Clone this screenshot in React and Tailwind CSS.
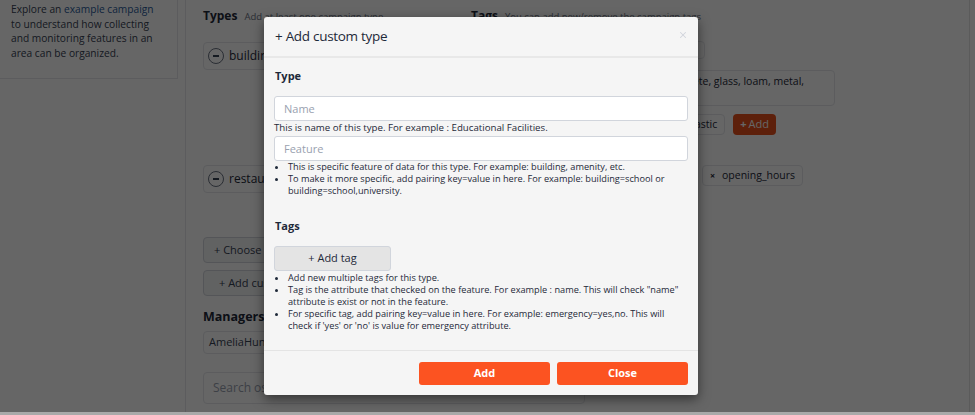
import { X } from "lucide-react";

const font = { fontFamily: '"Open Sans", "Liberation Sans", sans-serif' };

function TypeCard({ label }) {
  return (
    <div className="flex items-center gap-[5px] h-[28px] w-[260px] border border-gray-200 rounded px-[4px]">
      <span className="w-[16px] h-[16px] rounded-full border border-gray-500 flex items-center justify-center">
        <span className="w-[6px] h-[2px] bg-gray-700" />
      </span>
      <span className="text-[12px] text-gray-800">{label}</span>
    </div>
  );
}

function Chip({ children }) {
  return (
    <span className="inline-flex items-center gap-[7px] h-[21px] px-[7px] border border-gray-200 rounded text-[10.5px] text-gray-800 whitespace-nowrap shrink-0">
      <span className="text-[9px] font-bold">×</span>
      {children}
    </span>
  );
}

function Background() {
  return (
    <div className="flex h-[412px] bg-white" style={font}>
      {/* sidebar */}
      <div className="w-[186px] border-r border-gray-200 shrink-0">
        <div className="w-[178px] h-[79px] border-r border-b border-gray-200 px-[11px] pt-[2px] text-[10.2px] leading-[14.5px] text-gray-700">
          Explore an <span className="text-[#2a5a9a]">example campaign</span>
          <br />
          to understand how collecting
          <br />
          and monitoring features in an
          <br />
          area can be organized.
        </div>
      </div>

      {/* main */}
      <div className="flex-1 pl-[17px] pt-[7px] flex gap-[8px]">
        <div className="w-[260px] flex flex-col">
          <div className="flex items-baseline gap-[7px] h-[18px]">
            <span className="text-[12px] font-bold text-gray-800">Types</span>
            <span className="text-[9.5px] text-gray-500 whitespace-nowrap">Add at least one campaign type</span>
          </div>
          <div className="mt-[17px]">
            <TypeCard label="building" />
          </div>
          <div className="mt-[95px]">
            <TypeCard label="restaurant" />
          </div>
          <div className="mt-[44px] h-[26px] w-[200px] bg-gray-100 border border-gray-300 rounded flex items-center pl-[10px] text-[11px] text-gray-700 whitespace-nowrap">
            + Choose a predefined type
          </div>
          <div className="mt-[7px] h-[26px] w-[200px] bg-gray-100 border border-gray-300 rounded flex items-center pl-[15px] text-[11px] text-gray-700 whitespace-nowrap">
            + Add custom type
          </div>
          <div className="mt-[12px] text-[12.5px] leading-[18px] font-bold text-gray-800">Managers</div>
          <div className="mt-[5px] h-[23px] w-[120px] border border-gray-200 rounded flex items-center px-[5px] text-[11px] text-gray-700">
            AmeliaHunter
          </div>
          <div className="mt-[18px] h-[32px] w-[382px] border border-gray-200 rounded flex items-center px-[9px] text-[12px] text-gray-400">
            Search osm users
          </div>
        </div>

        <div className="flex flex-col">
          <div className="flex items-baseline gap-[7px] h-[18px]">
            <span className="text-[12px] font-bold text-gray-800">Tags</span>
            <span className="text-[9.5px] text-gray-500 whitespace-nowrap">You can add new/remove the campaign tags</span>
          </div>
          <div className="mt-[16px] h-[18px] w-[234px] border border-gray-200 rounded" />
          <div className="mt-[11px] h-[36px] w-[364px] border border-gray-200 rounded pr-[30px] pt-[3px] flex justify-end overflow-hidden text-[10.5px] text-gray-800 whitespace-nowrap">
            brick, cement, concrete, glass, loam, metal,
          </div>
          <div className="mt-[8px] w-[305px] flex items-center justify-end gap-[8px]">
            <Chip>metal</Chip>
            <Chip>plastic</Chip>
            <span className="h-[21px] px-[7px] bg-[#e8501c] rounded flex items-center text-[11px] text-white shrink-0">
              <span className="font-bold mr-[2px]">+</span>Add
            </span>
          </div>
          <div className="mt-[30px] w-[332px] flex items-center justify-end gap-[5px]">
            <Chip>name</Chip>
            <Chip>cuisine</Chip>
            <Chip>opening_hours</Chip>
          </div>
        </div>
      </div>
    </div>
  );
}

function Bullets({ items }) {
  return (
    <ul className="pl-[14px] text-[9.2px] leading-[12px] text-gray-800 list-disc">
      {items.map((t, i) => (
        <li key={i}>{t}</li>
      ))}
    </ul>
  );
}

function Modal() {
  return (
    <div
      className="absolute left-[264px] top-[17px] w-[434px] h-[378px] bg-[#f5f5f5] rounded-[3px] shadow-[0_4px_12px_rgba(0,0,0,0.5)] flex flex-col"
      style={font}
    >
      <div className="h-[41px] border-b-2 border-[#e8e8e8] flex items-center justify-between pl-[11px] pr-[10px]">
        <span className="text-[13.5px] tracking-[-0.3px] text-gray-800">+ Add custom type</span>
        <X size={10} strokeWidth={2.5} className="text-gray-300 -mt-[4px]" />
      </div>

      <div className="flex-1 px-[10px] pt-[11px]">
        <div className="text-[11px] leading-[14px] font-bold text-gray-800 pl-[1px]">Type</div>
        <input
          className="mt-[13px] w-full h-[25px] bg-white border border-gray-300 rounded-[3px] px-[9px] text-[11px] placeholder:text-gray-400 outline-none"
          placeholder="Name"
        />
        <div className="text-[9.7px] leading-[14px] text-gray-800">
          This is name of this type. For example : Educational Facilities.
        </div>
        <input
          className="mt-[1px] w-full h-[25px] bg-white border border-gray-300 rounded-[3px] px-[9px] text-[11px] placeholder:text-gray-400 outline-none"
          placeholder="Feature"
        />
        <Bullets
          items={[
            "This is specific feature of data for this type. For example: building, amenity, etc.",
            "To make it more specific, add pairing key=value in here. For example: building=school or building=school,university.",
          ]}
        />
        <div className="mt-[22px] text-[11px] leading-[14px] font-bold text-gray-800 pl-[1px]">Tags</div>
        <div className="mt-[13px] w-[117px] h-[25px] bg-[#e4e4e4] border border-gray-300 rounded-[3px] flex items-center justify-center text-[11px] text-gray-800">
          + Add tag
        </div>
        <div className="mt-[1px]">
          <Bullets
            items={[
              "Add new multiple tags for this type.",
              'Tag is the attribute that checked on the feature. For example : name. This will check "name" attribute is exist or not in the feature.',
              "For specific tag, add pairing key=value in here. For example: emergency=yes,no. This will check if 'yes' or 'no' is value for emergency attribute.",
            ]}
          />
        </div>
      </div>

      <div className="h-[45px] border-t border-[#e4e4e4] flex items-center justify-end gap-[7px] pr-[10px]">
        <div className="w-[131px] h-[23px] bg-[#fc5321] rounded-[3px] flex items-center justify-center text-[11px] font-bold text-white">
          Add
        </div>
        <div className="w-[131px] h-[23px] bg-[#fc5321] rounded-[3px] flex items-center justify-center text-[11px] font-bold text-white">
          Close
        </div>
      </div>
    </div>
  );
}

export default function App() {
  return (
    <div className="relative w-[975px] h-[415px] overflow-hidden bg-[#a9a9a9]">
      <Background />
      <div className="absolute inset-x-0 top-0 h-[412px] bg-black/60" />
      <div className="absolute right-[5px] top-0 h-[412px] w-px bg-black/10" />
      <Modal />
    </div>
  );
}
